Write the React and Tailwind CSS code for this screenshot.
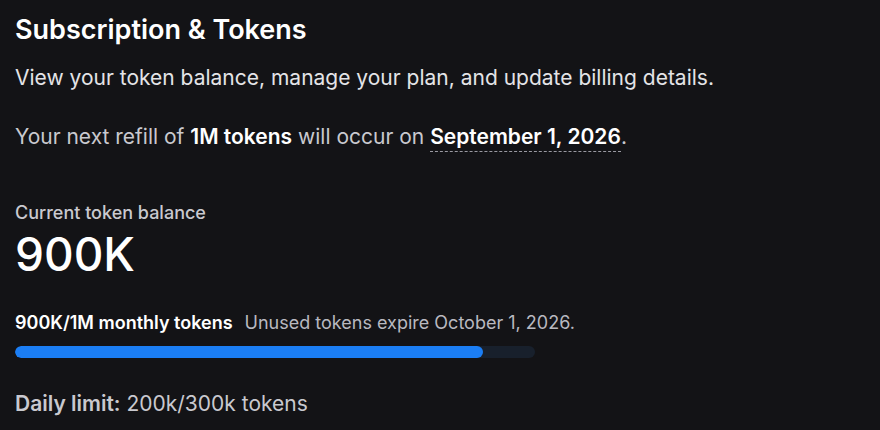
import React from 'react';

const SubscriptionTokens = () => {
    const used = 900000;
    const total = 1000000;
    const pct = (used / total) * 100;

    return (
        <div className="min-h-[430px] w-full bg-[#131316] text-white px-[15px] pt-[14px] font-['Inter',sans-serif]">
            <h1 className="text-[27px] leading-[32px] font-semibold">Subscription &amp; Tokens</h1>
            <p className="mt-[18px] text-[21px] leading-7 text-[#e4e4e7]">
                View your token balance, manage your plan, and update billing details.
            </p>
            <p className="mt-[31px] text-[21px] leading-7 text-[#c9c9cf]">
                Your next refill of <span className="font-semibold text-white">1M tokens</span> will occur on{' '}
                <span className="font-semibold text-white border-b border-dashed border-[#9a9aa2] pb-[2px]">September 1, 2026</span>.
            </p>

            <div className="mt-[50px]">
                <p className="text-[18px] leading-6 font-medium text-[#c9c9cf]">Current token balance</p>
                <p className="mt-[3px] text-[46px] leading-[52px] font-medium">900K</p>
            </div>

            <div className="mt-[31px] w-[520px]">
                <div className="flex items-baseline gap-3 text-[18px] leading-6 whitespace-nowrap">
                    <span className="font-semibold">900K/1M monthly tokens</span>
                    <span className="text-[#b9b9c0]">Unused tokens expire October 1, 2026.</span>
                </div>
                <div className="mt-[11px] h-3 w-full rounded-full bg-[#18202c] overflow-hidden">
                    <div className="h-full rounded-full bg-[#1b7ef5]" style={{ width: `${pct}%` }} />
                </div>
            </div>

            <p className="mt-[32px] text-[21px] leading-7 text-[#c9c9cf]">
                <span className="font-semibold">Daily limit:</span> 200k/300k tokens
            </p>
        </div>
    );
};

export default function App() {
    return <SubscriptionTokens />;
}
